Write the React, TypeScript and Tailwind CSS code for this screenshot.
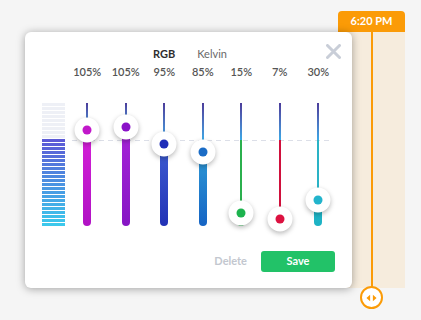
import React from 'react';

interface Channel {
  label: string;
  knob: number; // knob centre, px from top of the track
  bar: string; // gradient for thick bar below knob
  line: string; // thin line colour under the dashed mark
  dot: string;
}

const channels: Channel[] = [
  { label: '105%', knob: 27, bar: 'linear-gradient(#d620d8,#b012c4)', line: '#d01fd4', dot: '#c118ca' },
  { label: '105%', knob: 24, bar: 'linear-gradient(#a724d8,#8616c4)', line: '#a020d4', dot: '#8a12c8' },
  { label: '95%', knob: 41, bar: 'linear-gradient(#3e5ed2,#2232b6)', line: '#3b80dc', dot: '#1f2db8' },
  { label: '85%', knob: 49, bar: 'linear-gradient(#2e9ad6,#1564c4)', line: '#36a4e2', dot: '#1a6cc6' },
  { label: '15%', knob: 110, bar: 'linear-gradient(#2bb04e,#2bb04e)', line: '#2bb04e', dot: '#1db34e' },
  { label: '7%', knob: 116, bar: 'linear-gradient(#d0103c,#d0103c)', line: '#d0103c', dot: '#dc1240' },
  { label: '30%', knob: 97, bar: 'linear-gradient(#22b8ca,#1db2c4)', line: '#2ab3c6', dot: '#22b4cc' },
];

const TRACK_H = 123;
const MARK = 37;

const mix = (a: number[], b: number[], t: number) =>
  `rgb(${a.map((v, i) => Math.round(v + (b[i] - v) * t)).join(',')})`;

const LevelMeter = () => {
  const stripes = Array.from({ length: 31 }, (_, i) => i);
  return (
    <div className="w-[23px] h-[123px] flex flex-col gap-[1px]">
      {stripes.map((i) => {
        const on = i >= 9;
        const color = on ? mix([92, 90, 214], [60, 200, 236], (i - 9) / 21) : '#eef0f6';
        return <div key={i} className="h-[3px] w-full" style={{ background: color }} />;
      })}
    </div>
  );
};

const Slider = ({ ch }: { ch: Channel }) => (
  <div className="relative w-[38.5px] h-[123px]">
    {/* thin line, top part */}
    <div
      className="absolute left-1/2 -translate-x-1/2 top-0 w-[2px] bg-gradient-to-b from-[#4a3b9a] to-[#38a8e6]"
      style={{ height: Math.min(MARK, ch.knob) }}
    />
    {ch.knob > MARK && (
      <div
        className="absolute left-1/2 -translate-x-1/2 w-[2px]"
        style={{ top: MARK, height: ch.knob - MARK, background: ch.line }}
      />
    )}
    <div
      className="absolute left-1/2 -translate-x-1/2 w-[8px] rounded-b-full"
      style={{ top: ch.knob, height: TRACK_H - ch.knob, background: ch.bar }}
    />
    <div
      className="absolute left-1/2 -translate-x-1/2 -translate-y-1/2 w-[25px] h-[25px] rounded-full bg-white shadow-[0_2px_5px_rgba(0,0,0,0.28)] flex items-center justify-center z-10"
      style={{ top: ch.knob }}
    >
      <div className="w-[9px] h-[9px] rounded-full" style={{ background: ch.dot }} />
    </div>
  </div>
);

const LightCard = () => (
  <div className="relative z-10 mt-[21px] w-[327px] h-[256px] bg-white rounded-[6px] shadow-[0_1px_8px_rgba(0,0,0,0.35)] font-['Lato',sans-serif]">
    <button className="absolute left-[301px] top-[12px] w-[15px] h-[15px]">
      <svg viewBox="0 0 15 15" width="15" height="15">
        <path d="M1.5 1.5 L13.5 13.5 M13.5 1.5 L1.5 13.5" stroke="#c9ced8" strokeWidth="3" strokeLinecap="round" />
      </svg>
    </button>

    <div className="flex pt-[15px] pl-[128px] gap-[22px] text-[11px] leading-[14px]">
      <span className="font-bold text-[#2e2e2e]">RGB</span>
      <span className="text-[#6a6a6a]">Kelvin</span>
    </div>

    <div className="flex pl-[43px] mt-[4px] text-[11px] leading-[14px] font-semibold text-[#555]">
      {channels.map((ch, i) => (
        <div key={i} className="w-[38.5px] text-center">
          {ch.label}
        </div>
      ))}
    </div>

    <div className="relative flex pl-[17px] mt-[24px]">
      <LevelMeter />
      <div className="absolute left-[47px] top-[37px] w-[260px] h-[1px] bg-[repeating-linear-gradient(90deg,#dcdfe8_0_5px,transparent_5px_9px)]" />
      <div className="flex ml-[3px]">
        {channels.map((ch, i) => (
          <Slider key={i} ch={ch} />
        ))}
      </div>
    </div>

    <div className="flex justify-end items-center gap-[14px] pr-[17px] mt-[25px]">
      <button className="text-[11px] font-bold text-[#c3c7cf]">Delete</button>
      <button className="w-[74px] h-[21px] rounded-[3px] bg-[#22c268] text-white text-[11px] font-bold">Save</button>
    </div>
  </div>
);

const Timeline = () => (
  <div className="-ml-[14px] w-[67px] flex flex-col items-center font-['Lato',sans-serif]">
    <div className="w-full h-[21px] rounded-t-[4px] bg-[#fb9b07] text-white text-[11px] font-bold flex items-center justify-center">
      6:20 PM
    </div>
    <div className="w-full h-[256px] bg-[#f6ecdd] flex justify-center">
      <div className="w-[2px] h-full bg-[#fb9b07]" />
    </div>
    <div className="-mt-[2px] w-[23px] h-[23px] rounded-full border-2 border-[#fb9b07] bg-white flex items-center justify-center">
      <svg viewBox="0 0 12 8" width="11" height="8">
        <path d="M0.5 4 L4.5 0.5 L4.5 7.5 Z M11.5 4 L7.5 0.5 L7.5 7.5 Z" fill="#fb9b07" />
      </svg>
    </div>
  </div>
);

export default function App() {
  return (
    <div className="w-[421px] h-[320px] bg-[#f5f5f5] flex items-start pl-[25px] pt-[11px] overflow-hidden">
      <LightCard />
      <Timeline />
    </div>
  );
}
